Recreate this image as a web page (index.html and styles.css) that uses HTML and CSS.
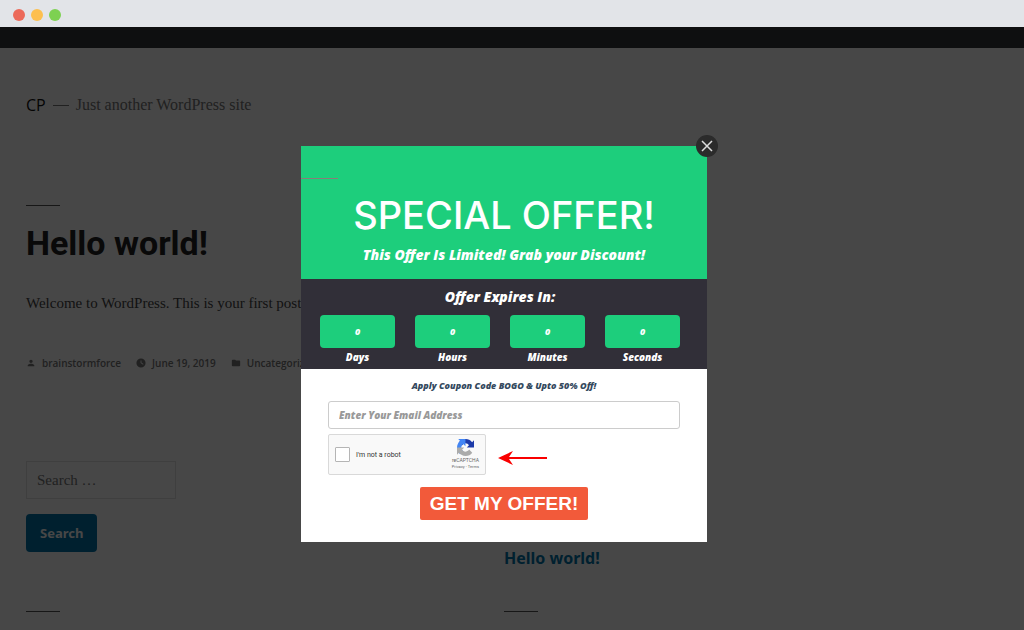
FILE: index.html
```
<!DOCTYPE html>
<html lang="en">
<head>
  <meta charset="UTF-8">
  <meta name="viewport" content="width=device-width, initial-scale=1.0">
  <title>CP - Just another WordPress site</title>
  <link rel="stylesheet" href="styles.css">
</head>
<body>
  <!-- Browser bar -->
  <div class="browser-bar">
    <span class="dot red"></span>
    <span class="dot yellow"></span>
    <span class="dot green"></span>
  </div>

  <div class="admin-bar"></div>

  <!-- Blog page -->
  <div class="site">
    <header class="site-header">
      <a class="site-name" href="#">CP</a>
      <span class="site-dash"></span>
      <span>Just another WordPress site</span>
    </header>

    <article class="post">
      <h1>Hello world!</h1>
      <p>Welcome to WordPress. This is your first post.</p>
      <footer class="post-meta">
        <a href="#">
          <svg viewBox="0 0 24 24"><path d="M12 12c2.200 0 4-1.800 4-4s-1.800-4-4-4-4 1.800-4 4 1.800 4 4 4zm0 2c-2.700 0-8 1.300-8 4v2h16v-2c0-2.700-5.300-4-8-4z"/></svg>
          brainstormforce
        </a>
        <a href="#">
          <svg viewBox="0 0 24 24"><path fill-rule="evenodd" d="M12 1a11 11 0 1 0 0 22 11 11 0 0 0 0-22zm5 15l-6-4V6h2v5l5 3.500z"/></svg>
          June 19, 2019
        </a>
        <a href="#">
          <svg viewBox="0 0 24 24"><path d="M10 4H4a2 2 0 0 0-2 2v12a2 2 0 0 0 2 2h16a2 2 0 0 0 2-2V8a2 2 0 0 0-2-2h-8z"/></svg>
          Uncategorized
        </a>
      </footer>
    </article>

    <div class="widgets">
      <form class="search-form">
        <input type="search" placeholder="Search …" aria-label="Search">
        <button type="button">Search</button>
      </form>
      <section class="recent">
        <h2>Recent Posts</h2>
        <a href="#">Hello world!</a>
      </section>
      <div class="rule"></div>
      <div class="rule"></div>
    </div>
  </div>

  <!-- Popup -->
  <div class="overlay">
    <div class="popup" role="dialog" aria-labelledby="popup-title">
      <button class="close" type="button" aria-label="Close">
        <svg viewBox="0 0 22 22"><path d="M6 6l10 10M16 6L6 16"/></svg>
      </button>

      <div class="offer">
        <hr>
        <h2 id="popup-title">SPECIAL OFFER!</h2>
        <p>This Offer Is Limited! Grab your Discount!</p>
      </div>

      <div class="countdown">
        <h3>Offer Expires In:</h3>
        <div class="timer">
          <div class="unit"><span class="value">0</span>Days</div>
          <div class="unit"><span class="value">0</span>Hours</div>
          <div class="unit"><span class="value">0</span>Minutes</div>
          <div class="unit"><span class="value">0</span>Seconds</div>
        </div>
      </div>

      <form class="signup">
        <p>Apply Coupon Code BOGO &amp; Upto 50% Off!</p>
        <input class="email" type="email" placeholder="Enter Your Email Address" aria-label="Email address">
        <div class="captcha-row">
          <div class="captcha">
            <input type="checkbox" id="robot">
            <label for="robot">I'm not a robot</label>
            <div class="captcha-brand">
              <svg viewBox="0 0 64 64">
                <path fill="#1c3aa9" d="M64 32V4.700l-7.200 7.100A32 32 0 0 0 6.600 12.700l11.700 11.900a15.500 15.500 0 0 1 4.800-5.300c2-1.600 5-2.900 9-2.900 5.500.2 10.400 3 12.900 7.200l-8.300 8.300z"/>
                <path fill="#4285f4" d="M31.900.1H4.600l7.200 7.200A32 32 0 0 0 12.600 57.500l11.900-11.700a15.500 15.500 0 0 1-5.300-4.800c-1.600-2-2.900-5-2.900-9 .2-5.500 3-10.400 7.200-12.900l8.300 8.300z"/>
                <path fill="#ababab" d="M0 32v27.300l7.200-7.100a32 32 0 0 0 50.200-.9L45.700 39.400a15.500 15.500 0 0 1-4.800 5.300c-2 1.600-5 2.900-9 2.900-5.500-.2-10.400-3-12.900-7.200l8.300-8.300z"/>
              </svg>
              <span>reCAPTCHA</span>
              <small><a href="#">Privacy</a> - <a href="#">Terms</a></small>
            </div>
          </div>
          <svg class="arrow" viewBox="0 0 50 14"><path d="M0 7L15 0l-4 6h38v2H11l4 6z"/></svg>
        </div>
        <button class="submit" type="button">GET MY OFFER!</button>
      </form>
    </div>
  </div>
</body>
</html>
```
FILE: styles.css
```
* {
  box-sizing: border-box;
}
body {
  margin: 0;
  background-color: white;
  color: #111;
  font-family: "Liberation Serif", serif;
  font-size: 16px;
  height: 100vh;
  overflow: hidden;
}
a {
  color: inherit;
  text-decoration: none;
}
h1, h2, h3, p {
  margin: 0;
}
.browser-bar {
  display: flex;
  align-items: center;
  gap: 6px;
  height: 27px;
  padding: 3px 13px 0;
  background-color: #e2e4e8;
}
.dot {
  width: 12px;
  height: 12px;
  border-radius: 50%;
}
.dot.red {
  background-color: #ec6a5a;
}
.dot.yellow {
  background-color: #fdbf4f;
}
.dot.green {
  background-color: #7dd151;
}
.admin-bar {
  height: 21px;
  background-color: #32373c;
}

/* Blog page */
.site {
  padding: 47px 42px 0 26px;
}
.site-header {
  display: flex;
  align-items: center;
  gap: 7px;
  height: 20px;
  color: #767676;
}
.site-name {
  color: #111;
  font-family: "Open Sans", sans-serif;
}
.site-dash {
  width: 16px;
  height: 1px;
  background-color: #767676;
}
.post {
  margin-top: 90px;
}
.post::before,
.rule {
  content: "";
  display: block;
  width: 34px;
  height: 1px;
  background-color: #555;
}
.post h1 {
  margin-top: 14px;
  color: #222;
  font: bold 34px/46px Roboto, sans-serif;
}
.post p {
  margin-top: 27px;
  color: #444;
  font-size: 15px;
  line-height: 20px;
}
.post-meta {
  display: flex;
  gap: 15px;
  margin-top: 42px;
  color: #767676;
  font: 600 10px/16px "Open Sans", sans-serif;
}
.post-meta a {
  display: flex;
  align-items: center;
  gap: 6px;
}
.post-meta svg {
  width: 10px;
  height: 10px;
  fill: currentColor;
}
.widgets {
  display: grid;
  grid-template-columns: 1fr 1fr;
  margin-top: 90px;
}
.widgets .rule {
  margin-top: 42px;
}
.search-form {
  display: flex;
  flex-direction: column;
  align-items: flex-start;
  gap: 15px;
}
.search-form input {
  width: 150px;
  height: 38px;
  padding: 0 10px;
  border: 1px solid #e2e2e2;
  background: white;
  font: 15px "Liberation Serif", serif;
}
.search-form input::placeholder {
  color: #767676;
}
.search-form button {
  height: 38px;
  padding: 0 14px;
  border: none;
  border-radius: 4px;
  background-color: #0073aa;
  color: white;
  font: bold 13px "Noto Sans", sans-serif;
}
.recent {
  padding-top: 36px;
  font-family: "Noto Sans", sans-serif;
}
.recent h2 {
  margin-bottom: 12px;
  font-size: 25px;
  line-height: 38px;
}
.recent a {
  color: #0073aa;
  font-size: 16px;
  font-weight: bold;
  line-height: 22px;
}

/* Popup */
.overlay {
  position: fixed;
  inset: 27px 0 0;
  display: flex;
  justify-content: center;
  align-items: center;
  padding: 31px 16px 0 0;
  background-color: rgba(0, 0, 0, 0.72);
}
.popup {
  position: relative;
  width: 406px;
  background-color: white;
  color: white;
  font: italic 800 10px "Open Sans", sans-serif;
  text-align: center;
}
.close {
  position: absolute;
  top: -11px;
  right: -11px;
  width: 22px;
  height: 22px;
  padding: 0;
  border: none;
  border-radius: 50%;
  background-color: #2b2b2b;
}
.close svg {
  display: block;
  fill: none;
  stroke: #ddd;
  stroke-width: 1.5;
}
.offer {
  height: 133px;
  padding-top: 32px;
  background-color: #1dce7c;
}
.offer hr {
  width: 37px;
  height: 1px;
  margin: 0;
  border: none;
  background-color: #8a7d78;
}
.offer h2 {
  margin-top: 12px;
  font: 500 38px/48px Inter, sans-serif;
}
.offer p {
  margin-top: 6px;
  font-size: 14px;
  line-height: 20px;
}
.countdown {
  height: 90px;
  padding: 8px 27px 0 19px;
  background-color: #312f38;
}
.countdown h3 {
  font-size: 14px;
  font-weight: 800;
  line-height: 20px;
}
.timer {
  display: grid;
  grid-template-columns: repeat(4, 1fr);
  gap: 20px;
  margin-top: 8px;
}
.unit {
  line-height: 18px;
}
.value {
  display: block;
  border-radius: 4px;
  background-color: #1dce7c;
  font-size: 9px;
  line-height: 33px;
}
.signup {
  padding: 10px 27px 22px;
}
.signup p {
  color: #34495e;
  font-size: 9px;
  line-height: 14px;
}
.email {
  display: block;
  width: 100%;
  height: 28px;
  margin-top: 8px;
  padding: 0 10px;
  border: 1px solid #ccc;
  border-radius: 3px;
  font: inherit;
}
.email::placeholder {
  color: #999;
}
.captcha-row {
  display: flex;
  align-items: center;
  gap: 12px;
  margin-top: 5px;
}
.captcha {
  display: flex;
  align-items: center;
  width: 158px;
  height: 41px;
  padding: 0 6px;
  border: 1px solid #d9d9d9;
  border-radius: 2px;
  background-color: #f9f9f9;
  color: #333;
  font: 7px Roboto, sans-serif;
}
.captcha input {
  appearance: none;
  width: 15px;
  height: 15px;
  margin: 0 6px 0 0;
  border: 1px solid #b5b5b5;
  border-radius: 1px;
  background-color: white;
}
.captcha-brand {
  display: flex;
  flex-direction: column;
  align-items: center;
  margin-left: auto;
  color: #666;
  font-size: 5px;
  line-height: 7px;
}
.captcha-brand svg {
  width: 17px;
  height: 17px;
  margin-bottom: 1px;
}
.captcha-brand small {
  font-size: 4px;
  line-height: 6px;
}
.arrow {
  width: 50px;
  height: 14px;
  margin-top: 6px;
  fill: #f90000;
}
.submit {
  display: block;
  height: 33px;
  margin: 12px auto 0;
  padding: 0 10px;
  border: none;
  border-radius: 2px;
  background-color: #f25a3a;
  color: white;
  font: bold 19px "Liberation Sans", sans-serif;
}
```
